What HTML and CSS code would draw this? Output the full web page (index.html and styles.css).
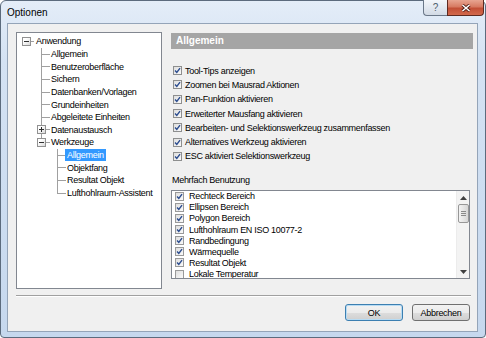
FILE: index.html
```html
<!DOCTYPE html>
<html lang="de">
<head>
    <meta charset="UTF-8">
    <meta name="viewport" content="width=device-width, initial-scale=1.0">
    <title>Optionen</title>
    <link rel="stylesheet" href="styles.css">
</head>
<body>

<div class="window">
    <div class="titlebar">
        <span class="title">Optionen</span>
        <div class="caption">
            <span class="cap-btn help">?</span>
            <span class="cap-btn close">
                <svg width="10" height="8" viewBox="0 0 10 8">
                    <path d="M1.5 1 L8.5 7 M8.5 1 L1.5 7" stroke="#4a1a12" stroke-width="3.2" fill="none"/>
                    <path d="M1.5 1 L8.5 7 M8.5 1 L1.5 7" stroke="#fff" stroke-width="1.6" fill="none"/>
                </svg>
            </span>
        </div>
    </div>

    <div class="client">
        <div class="content">
            <div class="tree">
                <ul>
                    <li class="root">
                        <div class="node"><span class="box minus"></span><span class="label">Anwendung</span></div>
                        <ul>
                            <li><div class="node"><span class="label">Allgemein</span></div></li>
                            <li><div class="node"><span class="label">Benutzeroberfläche</span></div></li>
                            <li><div class="node"><span class="label">Sichern</span></div></li>
                            <li><div class="node"><span class="label">Datenbanken/Vorlagen</span></div></li>
                            <li><div class="node"><span class="label">Grundeinheiten</span></div></li>
                            <li><div class="node"><span class="label">Abgeleitete Einheiten</span></div></li>
                            <li><div class="node"><span class="box plus"></span><span class="label">Datenaustausch</span></div></li>
                            <li>
                                <div class="node"><span class="box minus"></span><span class="label">Werkzeuge</span></div>
                                <ul>
                                    <li><div class="node"><span class="label selected">Allgemein</span></div></li>
                                    <li><div class="node"><span class="label">Objektfang</span></div></li>
                                    <li><div class="node"><span class="label">Resultat Objekt</span></div></li>
                                    <li><div class="node"><span class="label">Lufthohlraum-Assistent</span></div></li>
                                </ul>
                            </li>
                        </ul>
                    </li>
                </ul>
            </div>

            <div class="panel">
                <div class="panel-head">Allgemein</div>

                <div class="checks">
                    <div class="check"><span class="cb on"><svg viewBox="0 0 8 8"><path d="M1.2 4 L3.2 6.2 L6.9 1.3"/></svg></span>Tool-Tips anzeigen</div>
                    <div class="check"><span class="cb on"><svg viewBox="0 0 8 8"><path d="M1.2 4 L3.2 6.2 L6.9 1.3"/></svg></span>Zoomen bei Mausrad Aktionen</div>
                    <div class="check"><span class="cb on"><svg viewBox="0 0 8 8"><path d="M1.2 4 L3.2 6.2 L6.9 1.3"/></svg></span>Pan-Funktion aktivieren</div>
                    <div class="check"><span class="cb on"><svg viewBox="0 0 8 8"><path d="M1.2 4 L3.2 6.2 L6.9 1.3"/></svg></span>Erweiterter Mausfang aktivieren</div>
                    <div class="check"><span class="cb on"><svg viewBox="0 0 8 8"><path d="M1.2 4 L3.2 6.2 L6.9 1.3"/></svg></span>Bearbeiten- und Selektionswerkzeug zusammenfassen</div>
                    <div class="check"><span class="cb on"><svg viewBox="0 0 8 8"><path d="M1.2 4 L3.2 6.2 L6.9 1.3"/></svg></span>Alternatives Werkzeug aktivieren</div>
                    <div class="check"><span class="cb on"><svg viewBox="0 0 8 8"><path d="M1.2 4 L3.2 6.2 L6.9 1.3"/></svg></span>ESC aktiviert Selektionswerkzeug</div>
                </div>

                <div class="group-label">Mehrfach Benutzung</div>

                <div class="listbox">
                    <div class="items">
                        <div class="item"><span class="cb small on"><svg viewBox="0 0 8 8"><path d="M1.2 4 L3.2 6.2 L6.9 1.3"/></svg></span>Rechteck Bereich</div>
                        <div class="item"><span class="cb small on"><svg viewBox="0 0 8 8"><path d="M1.2 4 L3.2 6.2 L6.9 1.3"/></svg></span>Ellipsen Bereich</div>
                        <div class="item"><span class="cb small on"><svg viewBox="0 0 8 8"><path d="M1.2 4 L3.2 6.2 L6.9 1.3"/></svg></span>Polygon Bereich</div>
                        <div class="item"><span class="cb small on"><svg viewBox="0 0 8 8"><path d="M1.2 4 L3.2 6.2 L6.9 1.3"/></svg></span>Lufthohlraum EN ISO 10077-2</div>
                        <div class="item"><span class="cb small on"><svg viewBox="0 0 8 8"><path d="M1.2 4 L3.2 6.2 L6.9 1.3"/></svg></span>Randbedingung</div>
                        <div class="item"><span class="cb small on"><svg viewBox="0 0 8 8"><path d="M1.2 4 L3.2 6.2 L6.9 1.3"/></svg></span>Wärmequelle</div>
                        <div class="item"><span class="cb small on"><svg viewBox="0 0 8 8"><path d="M1.2 4 L3.2 6.2 L6.9 1.3"/></svg></span>Resultat Objekt</div>
                        <div class="item"><span class="cb small"></span>Lokale Temperatur</div>
                    </div>
                    <div class="scrollbar">
                        <svg class="arrow" width="7" height="4" viewBox="0 0 7 4"><path d="M0 4 L3.5 0 L7 4 Z" fill="#404040"/></svg>
                        <div class="thumb"><span></span><span></span><span></span></div>
                        <div class="track"></div>
                        <svg class="arrow" width="7" height="4" viewBox="0 0 7 4"><path d="M0 0 L3.5 4 L7 0 Z" fill="#404040"/></svg>
                    </div>
                </div>
            </div>
        </div>

        <div class="separator"></div>

        <div class="footer">
            <button class="btn default">OK</button>
            <button class="btn">Abbrechen</button>
        </div>
    </div>
</div>

</body>
</html>
```

FILE: styles.css
```css
* {
    box-sizing: border-box;
}
body {
    margin: 0;
    background-color: #fff;
    font-family: "Liberation Sans", Arial, sans-serif;
    font-size: 9px;
    letter-spacing: -0.3px;
    color: #000;
}
.window {
    width: 486px;
    height: 338px;
    border: 1px solid #5c6b7d;
    border-radius: 6px 6px 4px 4px;
    background: linear-gradient(to bottom, #e4edf8 0, #d4e2f3 60px, #c6d8ee 100%);
    padding: 0 7px 5px 6px;
    display: flex;
    flex-direction: column;
}

/* title bar */
.titlebar {
    height: 22px;
    display: flex;
    align-items: flex-start;
}
.title {
    font-size: 10px;
    letter-spacing: 0;
    line-height: 12px;
    margin-top: 6px;
    margin-right: auto;
}
.caption {
    display: flex;
    margin-top: -1px;
    margin-right: -6px;
}
.cap-btn {
    height: 16px;
    display: flex;
    align-items: center;
    justify-content: center;
    border: 1px solid #6a7788;
    border-top: none;
}
.cap-btn.help {
    width: 24px;
    border-right: none;
    border-radius: 0 0 0 4px;
    background: linear-gradient(to bottom, #f3f6fa 0, #e2e8f0 50%, #d2dae5 100%);
    color: #4f5d6d;
    font-size: 10px;
    letter-spacing: 0;
}
.cap-btn.close {
    width: 37px;
    border-color: #5e2a20;
    border-radius: 0 0 4px 0;
    background: linear-gradient(to bottom, #e8a591 0, #d77a62 45%, #c24f36 55%, #d2694c 100%);
}

/* client area */
.client {
    flex: 1;
    background-color: #f0f0f0;
    border: 1px solid #94a4b8;
    display: flex;
    flex-direction: column;
}
.content {
    display: flex;
    padding: 8px 4px 0 8px;
}

/* tree */
.tree {
    width: 146px;
    height: 257px;
    background-color: #fff;
    border: 1px solid #828790;
    padding-top: 2px;
    overflow: hidden;
}
.tree ul {
    list-style: none;
    margin: 0;
    padding: 0;
}
.tree li ul {
    padding-left: 15px;
}
.tree li li ul {
    padding-left: 16px;
}
.tree li {
    position: relative;
}
.tree li li::before {
    content: '';
    position: absolute;
    left: 9px;
    top: 0;
    width: 8px;
    height: 6px;
    border-left: 1px solid #a0a0a0;
    border-bottom: 1px solid #a0a0a0;
}
.tree li li::after {
    content: '';
    position: absolute;
    left: 9px;
    top: 6px;
    bottom: 0;
    border-left: 1px solid #a0a0a0;
}
.tree li li:last-child::after {
    display: none;
}
.tree .root > .node::before {
    content: '';
    position: absolute;
    left: 13px;
    top: 6px;
    width: 4px;
    border-top: 1px solid #a0a0a0;
}
.node {
    position: relative;
    height: 12.65px;
    display: flex;
    align-items: center;
    padding-left: 17px;
}
.label {
    padding: 0 2px;
    line-height: 12px;
    white-space: nowrap;
}
.label.selected {
    background-color: #3399ff;
    color: #fff;
}
.box {
    position: absolute;
    left: 5px;
    top: 2px;
    width: 9px;
    height: 9px;
    border: 1px solid #919191;
    background: linear-gradient(135deg, #fff 30%, #d9d9d9);
    z-index: 1;
}
.box::before {
    content: '';
    position: absolute;
    left: 1px;
    top: 3px;
    width: 5px;
    border-top: 1px solid #303030;
}
.box.plus::after {
    content: '';
    position: absolute;
    left: 3px;
    top: 1px;
    height: 5px;
    border-left: 1px solid #303030;
}

/* right panel */
.panel {
    flex: 1;
    margin-left: 9px;
    margin-top: 1px;
}
.panel-head {
    height: 16px;
    background-color: #a5a5a5;
    color: #fff;
    font-size: 10px;
    font-weight: bold;
    letter-spacing: 0;
    line-height: 16px;
    padding-left: 5px;
}
.checks {
    margin-top: 14.5px;
}
.check {
    height: 14.3px;
    display: flex;
    align-items: center;
    padding-left: 2px;
    white-space: nowrap;
}
.cb {
    width: 9px;
    height: 9px;
    border: 1px solid #8e8f8f;
    background: linear-gradient(135deg, #dedede, #fafafa);
    margin-right: 3px;
    flex-shrink: 0;
    display: flex;
}
.cb svg {
    width: 7px;
    height: 7px;
}
.cb svg path {
    fill: none;
    stroke: #2b4c8f;
    stroke-width: 1.6;
}
.cb.small {
    margin-right: 5px;
}
.group-label {
    margin-top: 10px;
    line-height: 12px;
    margin-bottom: 4px;
    padding-left: 1px;
}

/* list with scrollbar */
.listbox {
    width: 299px;
    height: 89px;
    background-color: #fff;
    border: 1px solid #828790;
    display: flex;
    overflow: hidden;
}
.items {
    flex: 1;
    padding-left: 3px;
}
.item {
    height: 11.15px;
    display: flex;
    align-items: center;
    white-space: nowrap;
}
.item .cb {
    border-color: #9a9a9a;
}
.scrollbar {
    width: 13px;
    background-color: #f3f3f3;
    border-left: 1px solid #ececec;
    display: flex;
    flex-direction: column;
    align-items: center;
    padding: 5px 0 4px;
}
.arrow {
    flex-shrink: 0;
}
.thumb {
    width: 11px;
    height: 19px;
    margin-top: 4px;
    border: 1px solid #979797;
    border-radius: 2px;
    background: linear-gradient(to right, #f3f3f3, #e2e2e2 60%, #d6d6d6);
    display: flex;
    flex-direction: column;
    align-items: center;
    justify-content: center;
    gap: 1px;
}
.thumb span {
    width: 5px;
    border-top: 1px solid #8a8a8a;
}
.track {
    flex: 1;
}

/* bottom */
.separator {
    margin: 6px 6px 0 8px;
    border-top: 1px solid #a0a0a0;
    border-bottom: 1px solid #fff;
}
.footer {
    display: flex;
    justify-content: flex-end;
    gap: 9px;
    padding: 7px 7px 0 0;
}
.btn {
    width: 58px;
    height: 17px;
    padding: 0;
    border: 1px solid #707070;
    border-radius: 3px;
    background: linear-gradient(to bottom, #f2f2f2 0, #ebebeb 50%, #dddddd 51%, #cfcfcf 100%);
    font-family: "Liberation Sans", Arial, sans-serif;
    font-size: 9px;
    letter-spacing: -0.3px;
    color: #000;
}
.btn.default {
    border-color: #3c7fb1;
    box-shadow: inset 0 0 0 1px #b7dbf3;
}
```
